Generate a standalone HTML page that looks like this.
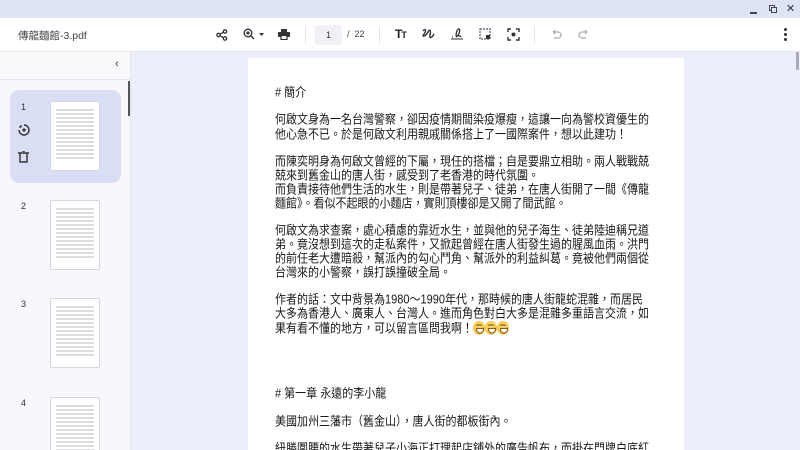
<!DOCTYPE html>
<html style="overflow:hidden;width:800px;height:450px"><head><meta charset="utf-8">
<style>
*{margin:0;padding:0;box-sizing:border-box}
body{width:800px;height:450px;overflow:hidden;background:#eceefb;font-family:"Liberation Sans","Noto Sans CJK TC",sans-serif;position:relative;color:#222}
.titlebar{position:absolute;left:0;top:0;width:800px;height:18px;background:#dfe3f6}
.toolbar{position:absolute;left:0;top:18px;width:800px;height:34px;background:#fff;border-bottom:1px solid #e3e3ea}
.side{position:absolute;left:0;top:52px;width:131px;height:398px;background:#f7f7fc;border-right:1px solid #e2e2ea}
.sidehead{position:absolute;left:0;top:0;width:130px;height:28px;border-bottom:1px solid #e6e6ee;background:#fafafd}
.card{position:absolute;left:10px;top:38px;width:111px;height:93px;background:#d9def5;border-radius:9px}
.thumb{position:absolute;left:50px;width:50px;height:70px;background:#fff;border:1px solid #d4d6e0;border-radius:2px;overflow:hidden}
.thumb::after{content:"";position:absolute;left:5px;top:6px;right:5px;bottom:9px;background:repeating-linear-gradient(#fff 0 1.5px,#b8b8c0 1.5px 2.3px,#fff 2.3px 4px)}
.num{position:absolute;left:21px;font-size:9px;color:#333}
.page{position:absolute;left:248px;top:58px;width:436px;height:392px;background:#fff}
.l{position:absolute;left:27px;font-size:11px;white-space:nowrap;line-height:13px;color:#1a1a1a;transform:scaleY(1.15);transform-origin:0 0}
.ic{position:absolute}
.emo{display:inline-block;width:12px;height:12px;border-radius:50%;background:radial-gradient(circle at 50% 40%,#ffe27a,#f0b429);vertical-align:-2px;position:relative}
.emo::after{content:"";position:absolute;left:3px;top:6px;width:6px;height:3px;background:#fff;border:1px solid #8a5a10;border-radius:0 0 4px 4px}
.emo::before{content:"";position:absolute;left:3px;top:3px;width:6px;height:2px;border-top:1px solid #6a4a10;border-radius:3px}
</style></head><body>
<div class="titlebar">
 <div style="position:absolute;left:750px;top:12px;width:7px;height:1.5px;background:#445"></div>
 <div style="position:absolute;left:769px;top:5px;width:6px;height:6px;border:1.5px solid #445;background:#dfe3f6"></div>
 <div style="position:absolute;left:771px;top:7px;width:6px;height:6px;border:1.5px solid #445;background:#dfe3f6"></div>
 <div style="position:absolute;left:786px;top:2px;font-size:11px;color:#334">✕</div>
</div>
<div class="toolbar">
 <div style="position:absolute;left:18px;top:10px;font-size:10.5px;color:#444">傳龍麵館-3.pdf</div>
 <svg class="ic" style="left:216px;top:11px" width="12" height="12" viewBox="0 0 12 12"><circle cx="9" cy="2.5" r="1.7" fill="none" stroke="#333" stroke-width="1.3"/><circle cx="2.5" cy="6" r="1.7" fill="none" stroke="#333" stroke-width="1.3"/><circle cx="9" cy="9.5" r="1.7" fill="none" stroke="#333" stroke-width="1.3"/><path d="M4 5.2L7.5 3.3M4 6.8L7.5 8.7" stroke="#333" stroke-width="1.2"/></svg>
 <svg class="ic" style="left:243px;top:10px" width="24" height="13" viewBox="0 0 24 13"><circle cx="5" cy="5" r="3.8" fill="none" stroke="#333" stroke-width="1.4"/><path d="M7.8 7.8L11 11M3.2 5h3.6M5 3.2v3.6" stroke="#333" stroke-width="1.4"/><path d="M16 5h5l-2.5 3z" fill="#333"/></svg>
 <svg class="ic" style="left:278px;top:11px" width="12" height="11" viewBox="0 0 12 11"><rect x="3" y="0" width="6" height="3" fill="#333"/><rect x="0" y="3" width="12" height="5" rx="1" fill="#333"/><rect x="3" y="6.5" width="6" height="4" fill="#fff" stroke="#333" stroke-width="1.2"/></svg>
 <div style="position:absolute;left:305px;top:8px;width:1px;height:18px;background:#e5e5ea"></div>
 <div style="position:absolute;left:315px;top:7px;width:27px;height:20px;background:#f1f1f5;border-radius:3px;font-size:9px;text-align:center;line-height:20px;color:#333">1</div>
 <div style="position:absolute;left:347px;top:11px;font-size:9px;color:#444">/&nbsp;&nbsp;22</div>
 <div style="position:absolute;left:379px;top:8px;width:1px;height:18px;background:#e5e5ea"></div>
 <div style="position:absolute;left:395px;top:9px;font-size:12px;font-weight:bold;color:#222;letter-spacing:-1px">T<span style="font-size:9px">T</span></div>
 <svg class="ic" style="left:422px;top:10px" width="13" height="12" viewBox="0 0 13 12"><path d="M1 3C3 0 5 2 2 6S4 8 6 4 9 3 8 7 10 10 12 6" fill="none" stroke="#333" stroke-width="1.4"/></svg>
 <svg class="ic" style="left:450px;top:9px" width="14" height="15" viewBox="0 0 14 15"><path d="M1 12h12" stroke="#333" stroke-width="1"/><path d="M2 10h1M7 10c-2-1 0-9 2-8s-1 7-2 7 3-1 4 1" fill="none" stroke="#333" stroke-width="1.3"/></svg>
 <svg class="ic" style="left:479px;top:10px" width="12" height="12" viewBox="0 0 12 12"><rect x="1" y="1" width="10" height="10" fill="none" stroke="#555" stroke-width="1.2" stroke-dasharray="2 1"/><rect x="7" y="7" width="4" height="4" fill="#333"/></svg>
 <svg class="ic" style="left:507px;top:10px" width="13" height="13" viewBox="0 0 13 13"><path d="M1 4V1h3M9 1h3v3M12 9v3H9M4 12H1V9" fill="none" stroke="#333" stroke-width="1.4"/><circle cx="6.5" cy="6.5" r="2" fill="#333"/></svg>
 <div style="position:absolute;left:534px;top:8px;width:1px;height:18px;background:#e5e5ea"></div>
 <svg class="ic" style="left:550px;top:11px" width="12" height="11" viewBox="0 0 12 11"><path d="M3 3h5a3 3 0 010 6H4M3 3l2-2M3 3l2 2" fill="none" stroke="#aaa" stroke-width="1.2"/></svg>
 <svg class="ic" style="left:578px;top:11px" width="12" height="11" viewBox="0 0 12 11"><path d="M9 3H4a3 3 0 000 6h4M9 3L7 1M9 3L7 5" fill="none" stroke="#aaa" stroke-width="1.2"/></svg>
 <div style="position:absolute;left:784px;top:10px;width:3px;height:3px;background:#333;border-radius:50%;box-shadow:0 5px 0 #333,0 10px 0 #333"></div>
</div>
<div class="side">
 <div class="sidehead"><div style="position:absolute;left:115px;top:6px;font-size:11px;color:#333">‹</div></div>
 <div style="position:absolute;left:128px;top:29px;width:2px;height:35px;background:#555"></div>
 <div class="card"></div>
 <div class="num" style="top:50px">1</div>
 <svg class="ic" style="left:18px;top:72px" width="12" height="12" viewBox="0 0 12 12"><path d="M6 1a5 5 0 11-5 5" fill="none" stroke="#333" stroke-width="1.4"/><path d="M1 3l2 0 0-2" fill="none" stroke="#333" stroke-width="1.2"/><circle cx="6" cy="6" r="1.6" fill="#333"/></svg>
 <svg class="ic" style="left:18px;top:99px" width="11" height="12" viewBox="0 0 11 12"><path d="M0 2h11M4 0h3M2 2v9h7V2" fill="none" stroke="#333" stroke-width="1.4"/></svg>
 <div class="thumb" style="top:49px"></div>
 <div class="num" style="top:149px">2</div><div class="thumb" style="top:148px"></div>
 <div class="num" style="top:247px">3</div><div class="thumb" style="top:246px"></div>
 <div class="num" style="top:346px">4</div><div class="thumb" style="top:345px"></div>
</div>
<div style="position:absolute;left:796px;top:52px;width:3px;height:18px;background:#aab;border-radius:2px"></div>
<div class="page">
 <div class="l" style="top:28px"># 簡介</div>
 <div class="l" style="top:55px">何啟文身為一名台灣警察，卻因疫情期間染疫爆瘦，這讓一向為警校資優生的</div>
 <div class="l" style="top:70px">他心急不已。於是何啟文利用親戚關係搭上了一國際案件，想以此建功！</div>
 <div class="l" style="top:97px">而陳奕明身為何啟文曾經的下屬，現任的搭檔；自是要鼎立相助。兩人戰戰兢</div>
 <div class="l" style="top:111px">兢來到舊金山的唐人街，感受到了老香港的時代氛圍。</div>
 <div class="l" style="top:125px">而負責接待他們生活的水生，則是帶著兒子、徒弟，在唐人街開了一間《傳龍</div>
 <div class="l" style="top:139px">麵館》。看似不起眼的小麵店，實則頂樓卻是又開了間武館。</div>
 <div class="l" style="top:166px">何啟文為求查案，處心積慮的靠近水生，並與他的兒子海生、徒弟陸迪稱兄道</div>
 <div class="l" style="top:180px">弟。竟沒想到這次的走私案件，又掀起曾經在唐人街發生過的腥風血雨。洪門</div>
 <div class="l" style="top:194px">的前任老大遭暗殺，幫派內的勾心鬥角、幫派外的利益糾葛。竟被他們兩個從</div>
 <div class="l" style="top:208px">台灣來的小警察，誤打誤撞破全局。</div>
 <div class="l" style="top:235px">作者的話：文中背景為1980～1990年代，那時候的唐人街龍蛇混雜，而居民</div>
 <div class="l" style="top:249px">大多為香港人、廣東人、台灣人。進而角色對白大多是混雜多重語言交流，如</div>
 <div class="l" style="top:263px">果有看不懂的地方，可以留言區問我啊！<span class="emo"></span><span class="emo"></span><span class="emo"></span></div>
 <div class="l" style="top:329px"># 第一章 永遠的李小龍</div>
 <div class="l" style="top:357px">美國加州三藩市（舊金山），唐人街的都板街內。</div>
 <div class="l" style="top:384px">紐勝圍腰的水生帶著兒子小海正打理起店鋪外的廣告帆布，而掛在門牌白底紅</div>
</div>
</body></html>
